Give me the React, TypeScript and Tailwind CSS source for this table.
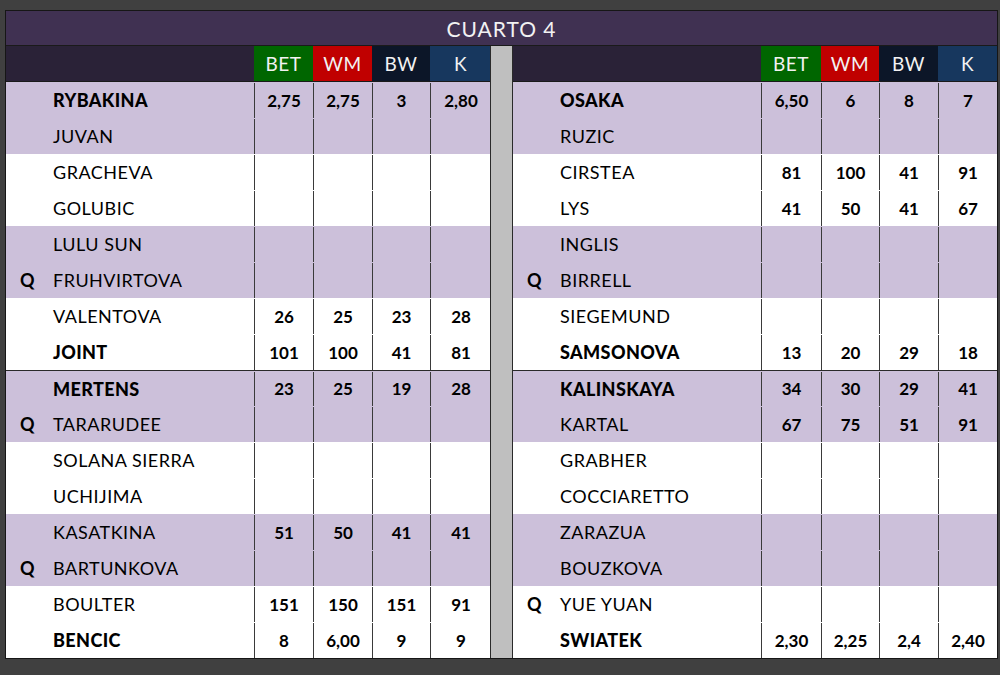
import React from "react";

type Row = { q?: boolean; name: string; bold?: boolean; v?: string[] };

const left: Row[] = [
  { name: "RYBAKINA", bold: true, v: ["2,75", "2,75", "3", "2,80"] },
  { name: "JUVAN" },
  { name: "GRACHEVA" },
  { name: "GOLUBIC" },
  { name: "LULU SUN" },
  { q: true, name: "FRUHVIRTOVA" },
  { name: "VALENTOVA", v: ["26", "25", "23", "28"] },
  { name: "JOINT", bold: true, v: ["101", "100", "41", "81"] },
  { name: "MERTENS", bold: true, v: ["23", "25", "19", "28"] },
  { q: true, name: "TARARUDEE" },
  { name: "SOLANA SIERRA" },
  { name: "UCHIJIMA" },
  { name: "KASATKINA", v: ["51", "50", "41", "41"] },
  { q: true, name: "BARTUNKOVA" },
  { name: "BOULTER", v: ["151", "150", "151", "91"] },
  { name: "BENCIC", bold: true, v: ["8", "6,00", "9", "9"] },
];

const right: Row[] = [
  { name: "OSAKA", bold: true, v: ["6,50", "6", "8", "7"] },
  { name: "RUZIC" },
  { name: "CIRSTEA", v: ["81", "100", "41", "91"] },
  { name: "LYS", v: ["41", "50", "41", "67"] },
  { name: "INGLIS" },
  { q: true, name: "BIRRELL" },
  { name: "SIEGEMUND" },
  { name: "SAMSONOVA", bold: true, v: ["13", "20", "29", "18"] },
  { name: "KALINSKAYA", bold: true, v: ["34", "30", "29", "41"] },
  { name: "KARTAL", v: ["67", "75", "51", "91"] },
  { name: "GRABHER" },
  { name: "COCCIARETTO" },
  { name: "ZARAZUA" },
  { name: "BOUZKOVA" },
  { q: true, name: "YUE YUAN" },
  { name: "SWIATEK", bold: true, v: ["2,30", "2,25", "2,4", "2,40"] },
];

const nameFont = { fontFamily: "Lato, 'DejaVu Sans', sans-serif" };

function Half({ rows, widths }: { rows: Row[]; widths: number[] }) {
  const heads = [
    { t: "BET", c: "bg-[#006600]" },
    { t: "WM", c: "bg-[#c00000]" },
    { t: "BW", c: "bg-[#0c1628]" },
    { t: "K", c: "bg-[#17375e]" },
  ];
  return (
    <div className="flex flex-col w-[484px]">
      <div className="flex h-[36px] bg-[#2a2237] border-b border-[#1a1a1a]">
        <div className="w-[248px] shrink-0" />
        {heads.map((h, i) => (
          <div
            key={h.t}
            style={{ width: widths[i] }}
            className={`shrink-0 flex items-center justify-center pt-[1px] text-[19px] text-[#f2f2f2] tracking-[0.5px] ${h.c}`}
          >
            <span style={nameFont}>{h.t}</span>
          </div>
        ))}
      </div>
      {rows.map((r, idx) => {
        const lav = Math.floor(idx / 2) % 2 === 0;
        return (
          <div
            key={idx}
            className={`flex h-[36px] pt-[1px] ${lav ? "bg-[#ccc0da]" : "bg-white"} ${idx === 8 ? "border-t border-[#2a2a2a]" : ""}`}
          >
            <div className="w-[248px] shrink-0 flex items-center text-[18px] text-black" style={nameFont}>
              <span className="w-[47px] pl-[14px] shrink-0 font-bold">{r.q ? "Q" : ""}</span>
              <span className={r.bold ? "font-black tracking-[0.4px]" : "font-normal tracking-[0.5px]"}>{r.name}</span>
            </div>
            {widths.map((w, i) => (
              <div
                key={i}
                style={{ width: w }}
                className="shrink-0 border-l border-[#3a3a3a] flex items-center justify-center text-[17px] font-bold text-black"
              >
                <span style={nameFont}>{r.v ? r.v[i] : ""}</span>
              </div>
            ))}
          </div>
        );
      })}
    </div>
  );
}

export default function App() {
  return (
    <div className="w-[1000px] h-[675px] bg-[#404040] pt-[10px] pl-[5px] overflow-hidden">
      <div className="w-[993px] border border-[#161616] bg-[#2a2237]">
        <div
          className="h-[35px] bg-[#403152] border-b border-[#1a1a1a] flex items-center justify-center pt-[1px] text-[21px] text-[#f2f2f2] tracking-[1px]"
          style={nameFont}
        >
          CUARTO 4
        </div>
        <div className="flex">
          <Half rows={left} widths={[59, 59, 58, 61]} />
          <div className="w-[23px] shrink-0 bg-[#bfbfbf] border-x border-[#2a2a2a]" />
          <Half rows={right} widths={[60, 58, 59, 59]} />
        </div>
      </div>
    </div>
  );
}
